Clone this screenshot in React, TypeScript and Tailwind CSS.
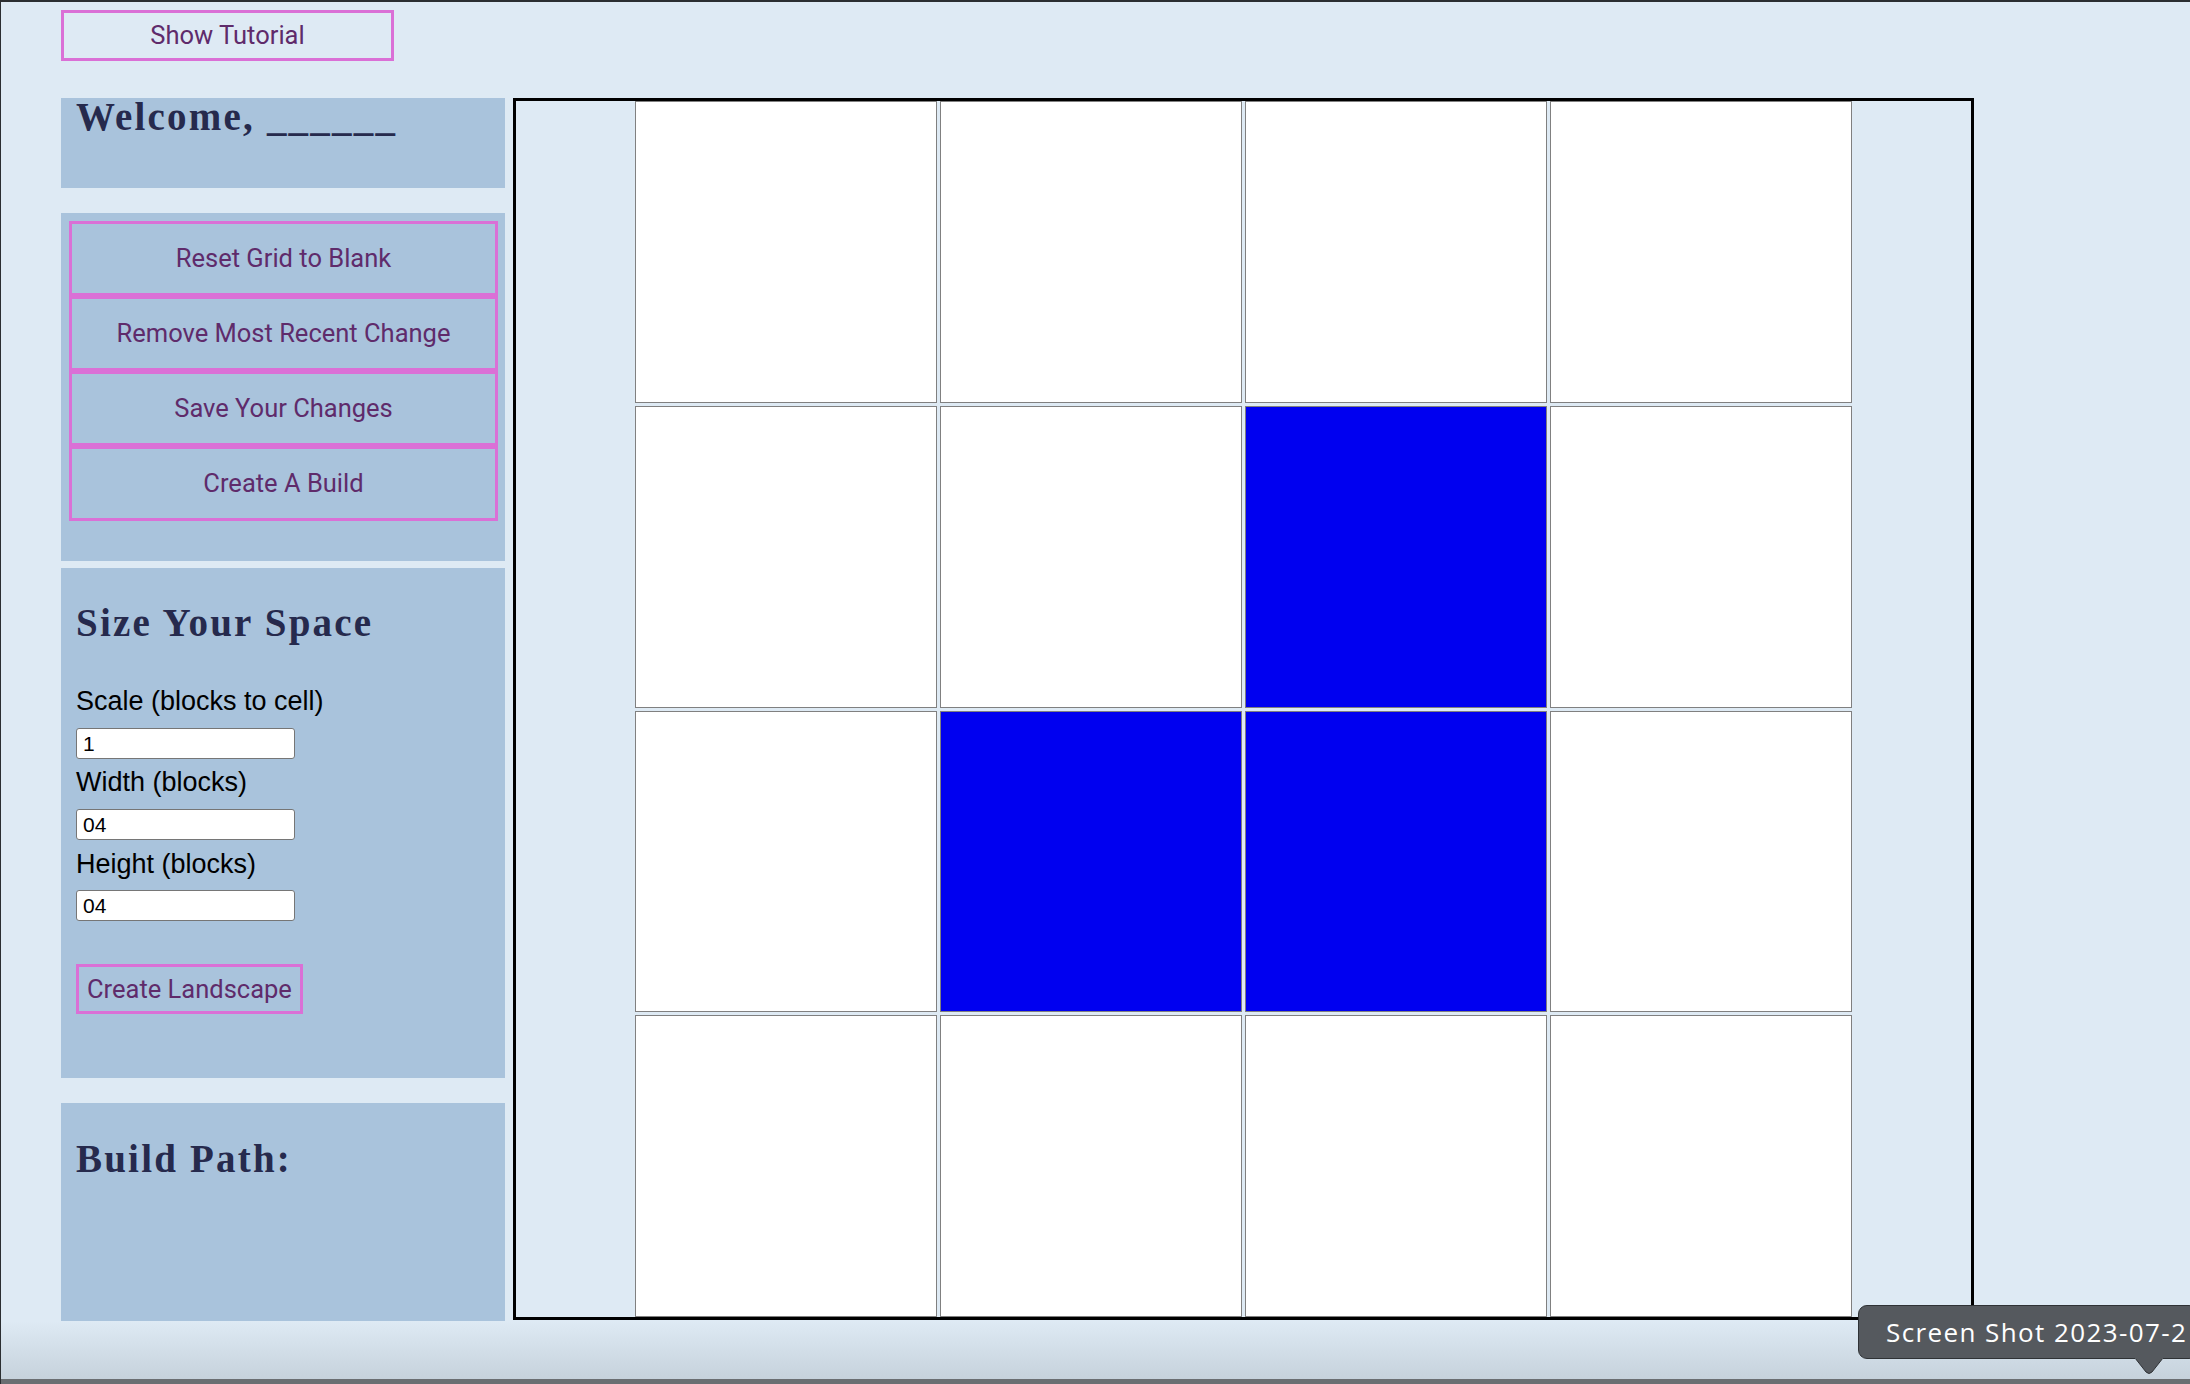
import React from 'react';

const SERIF = "font-['Liberation_Serif',Georgia,serif]";
const SANS = "font-['Liberation_Sans',Arial,sans-serif]";
const ROBOTO = "font-['Roboto',sans-serif]";

// row-major 4x4, true = painted block
const CELLS: boolean[] = [
  false, false, false, false,
  false, false, true, false,
  false, true, true, false,
  false, false, false, false,
];

const ACTIONS = ['Reset Grid to Blank', 'Remove Most Recent Change', 'Save Your Changes', 'Create A Build'];

function Field({ label, value, labelGap, inputGap }: { label: string; value: string; labelGap: string; inputGap: string }) {
  return (
    <>
      <label className={`block ${labelGap} ${SANS} text-[27px] leading-[30px] text-black`}>{label}</label>
      <input
        readOnly
        value={value}
        className={`block ${inputGap} h-[31px] w-[219px] rounded-[3px] border border-[#767676] bg-white pl-[6px] ${SANS} text-[21px] text-black outline-none`}
      />
    </>
  );
}

export default function App() {
  return (
    <div className="relative h-[1384px] w-[2190px] overflow-hidden border-l border-t-2 border-[#2b2e31] bg-[#deeaf4]">
      <button
        className={`ml-[60px] mt-[8px] flex h-[51px] w-[333px] items-center justify-center border-[3px] border-[#da70d6] ${ROBOTO} text-[25.5px] text-[#5f2b6b]`}
      >
        Show Tutorial
      </button>

      <div className="ml-[60px] mt-[37px] flex items-start gap-[8px]">
        {/* sidebar */}
        <div className="flex w-[444px] flex-col">
          <div className="h-[90px] bg-[#a9c3dc] px-[15px]">
            <h1 className={`${SERIF} text-[39px] font-bold leading-[38px] tracking-[2.2px] text-[#262a4d]`}>Welcome, ______</h1>
          </div>

          <div className="mt-[25px] h-[348px] bg-[#a9c3dc] py-[8px] pl-[8px] pr-[7px]">
            {ACTIONS.map(a => (
              <button
                key={a}
                className={`flex h-[75px] w-full items-center justify-center border-[3px] border-[#da70d6] ${ROBOTO} text-[25.5px] text-[#5f2b6b]`}
              >
                {a}
              </button>
            ))}
          </div>

          <div className="mt-[7px] h-[510px] bg-[#a9c3dc] px-[15px] pt-[33px]">
            <h2 className={`${SERIF} text-[39px] font-bold leading-[44px] tracking-[2.2px] text-[#262a4d]`}>Size Your Space</h2>
            <Field label="Scale (blocks to cell)" value="1" labelGap="mt-[41px]" inputGap="mt-[12px]" />
            <Field label="Width (blocks)" value="04" labelGap="mt-[8px]" inputGap="mt-[12px]" />
            <Field label="Height (blocks)" value="04" labelGap="mt-[9px]" inputGap="mt-[11px]" />
            <button
              className={`mt-[43px] flex h-[50px] items-center border-[3px] border-[#da70d6] px-[8px] ${ROBOTO} text-[25.5px] text-[#5f2b6b]`}
            >
              Create Landscape
            </button>
          </div>

          <div className="mt-[25px] h-[218px] bg-[#a9c3dc] px-[15px] pt-[34px]">
            <h2 className={`${SERIF} text-[39px] font-bold leading-[44px] tracking-[2.2px] text-[#262a4d]`}>Build Path:</h2>
          </div>
        </div>

        {/* landscape grid */}
        <div className="flex h-[1222px] w-[1461px] justify-center border-[3px] border-black">
          <div className="grid h-full grid-cols-[repeat(4,302px)] grid-rows-4 gap-[3px]">
            {CELLS.map((on, i) => (
              <div key={i} className={`border border-[#808080] ${on ? 'bg-[#0000f0]' : 'bg-white'}`} />
            ))}
          </div>
        </div>
      </div>

      {/* window chrome at the bottom of the capture */}
      <div className="absolute bottom-0 left-0 right-0 h-[63px] border-b-[5px] border-[#6a6e72] bg-linear-to-b from-[#deeaf4]/0 to-[#c6d2dc]" />

      <div className="absolute left-[1857px] top-[1303px]">
        <div className={`flex h-[54px] w-[340px] items-center rounded-[9px] border border-[#2f3235] bg-[#55595e] pl-[27px] font-['Open_Sans',sans-serif] whitespace-nowrap text-[26px] tracking-[1.4px] text-white`}>
          Screen Shot 2023-07-2
        </div>
        <svg className="absolute left-[277px] top-[52px]" width="28" height="18" viewBox="0 0 28 18">
          <path d="M0 1 L11 15 Q14 18 17 15 L28 1 Z" fill="#55595e" stroke="#2f3235" strokeWidth="1" />
          <rect x="0" y="0" width="28" height="2" fill="#55595e" />
        </svg>
      </div>
    </div>
  );
}
